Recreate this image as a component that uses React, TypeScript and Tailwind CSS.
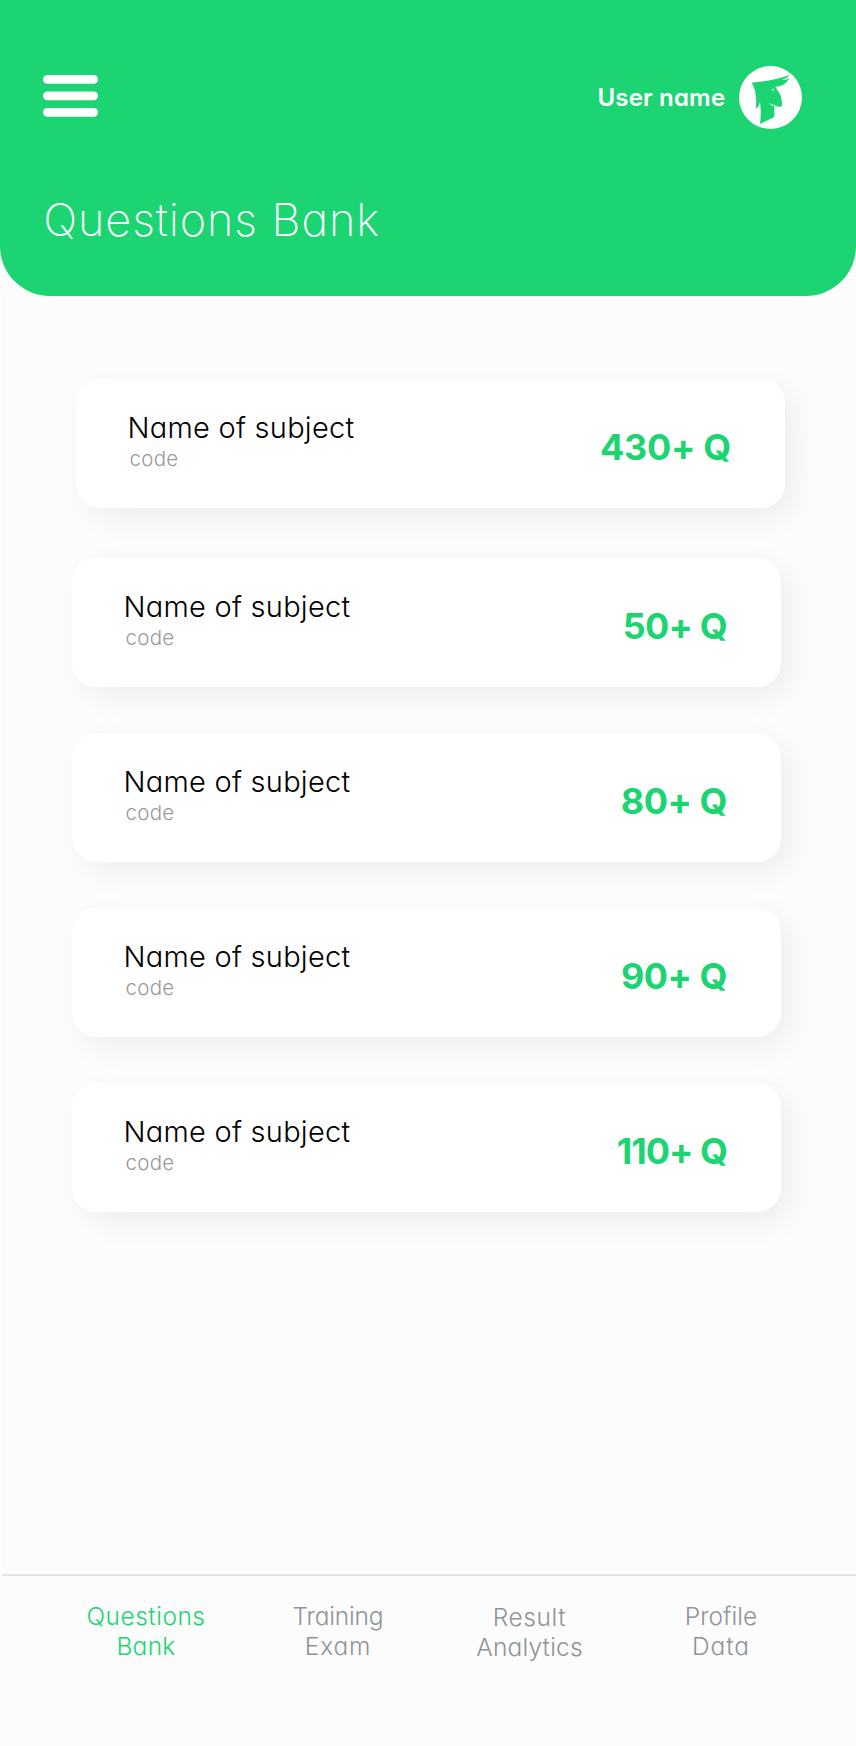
const subjects = [
  { name: 'Name of subject', code: 'code', count: '430+ Q', card: 'ml-1 mb-[50px]', spacing: 'tracking-[-0.3px]' },
  { name: 'Name of subject', code: 'code', count: '50+ Q', card: 'mb-[46px]', spacing: 'tracking-[-0.8px]' },
  { name: 'Name of subject', code: 'code', count: '80+ Q', card: 'mb-[46px]', spacing: 'tracking-[-0.5px]' },
  { name: 'Name of subject', code: 'code', count: '90+ Q', card: 'mb-[46px]', spacing: 'tracking-[-0.5px]' },
  { name: 'Name of subject', code: 'code', count: '110+ Q', card: '', spacing: 'tracking-[-1px]' },
];

const tabs = [
  { top: 'Questions', bottom: 'Bank', box: 'w-[192px] text-[#1cd572]', first: 'tracking-[0.5px]', second: 'tracking-[0.3px]' },
  { top: 'Training', bottom: 'Exam', box: 'w-[192px] text-[#8f9499]', first: 'tracking-[-0.2px]', second: 'tracking-[0.8px]' },
  { top: 'Result', bottom: 'Analytics', box: 'w-[191px] pt-px text-[#8f9499]', first: 'tracking-[0.6px]', second: 'tracking-[0.2px]' },
  { top: 'Profile', bottom: 'Data', box: 'w-[192px] text-[#8f9499]', first: '', second: 'tracking-[1px]' },
];

function MenuIcon() {
  return (
    <svg className="h-[42px] w-[55px]" viewBox="0 0 55 42" fill="#fff">
      <rect y="0" width="55" height="8.8" rx="4.4" />
      <rect y="16.4" width="55" height="8.8" rx="4.4" />
      <rect y="33" width="55" height="8.8" rx="4.4" />
    </svg>
  );
}

function Avatar() {
  return (
    <svg className="size-[63px]" viewBox="477 48 189 189">
      <circle cx="571.5" cy="142.5" r="94.5" fill="#fff" />
      <path
        fill="#1cd572"
        d="M515 98C552 95 592 88 629 75C625 82 616 87 606 90C615 90 622 87 628 83C622 99 606 109 586 110C592 120 599 128 602 137C605 147 608 162 604 170C597 172 591 167 583 168L583 201L540 222C543 200 543 178 540 157C537 167 533 173 527 177C531 148 528 119 515 98Z"
      />
      <circle cx="579" cy="119" r="2.6" fill="#fff" />
      <path d="M569 160C573 166 578 166 586 166" fill="none" stroke="#fff" strokeWidth="2.6" />
    </svg>
  );
}

export default function App() {
  return (
    <div className="flex h-[1746px] w-[856px] flex-col bg-[#fcfcfc] font-['Inter',sans-serif] [font-feature-settings:'cv11']">
      <header className="ml-[0.3px] h-[296px] shrink-0 rounded-b-[50px] bg-[#1cd572] text-white">
        <div className="flex h-[129px] items-end justify-between pr-[53.7px] pl-[42.7px]">
          <div className="pb-3">
            <MenuIcon />
          </div>
          <div className="flex items-center gap-[14px]">
            <span className="text-[24px] leading-8 font-semibold tracking-[0.2px]">User name</span>
            <Avatar />
          </div>
        </div>
        <h1 className="mt-[63px] pl-[43px] text-[45px] leading-[56px] font-extralight tracking-[0.9px]">Questions Bank</h1>
      </header>

      <main className="flex flex-1 flex-col border-l border-white pt-[83px] pl-[71px]">
        {subjects.map((s) => (
          <section
            key={s.count}
            className={`flex h-[129px] w-[709px] shrink-0 justify-between rounded-[24px] bg-white pr-[54px] pl-[51.5px] shadow-[10px_10px_30px_rgba(0,0,0,0.06)] ${s.card}`}
          >
            <div className="pt-[31px] whitespace-nowrap">
              <h2 className="text-[29px] leading-9 font-light tracking-[0.25px] text-black">{s.name}</h2>
              <p className="mt-[1px] pl-[2px] text-[20.5px] leading-6 font-[260] tracking-[0.3px] text-[#999]">{s.code}</p>
            </div>
            <div className={`pt-[46px] text-[36px] leading-[44px] font-bold whitespace-nowrap text-[#1cd572] ${s.spacing}`}>{s.count}</div>
          </section>
        ))}
      </main>

      <nav className="ml-[2px] flex h-[172px] shrink-0 border-t-2 border-[#e3e3e3] pt-[25px] pl-[48px]">
        {tabs.map((t) => (
          <a key={t.top} className={`flex shrink-0 flex-col text-center text-[24.5px] leading-[30px] font-[280] ${t.box}`}>
            <span className={t.first}>{t.top}</span>
            <span className={t.second}>{t.bottom}</span>
          </a>
        ))}
      </nav>
    </div>
  );
}
